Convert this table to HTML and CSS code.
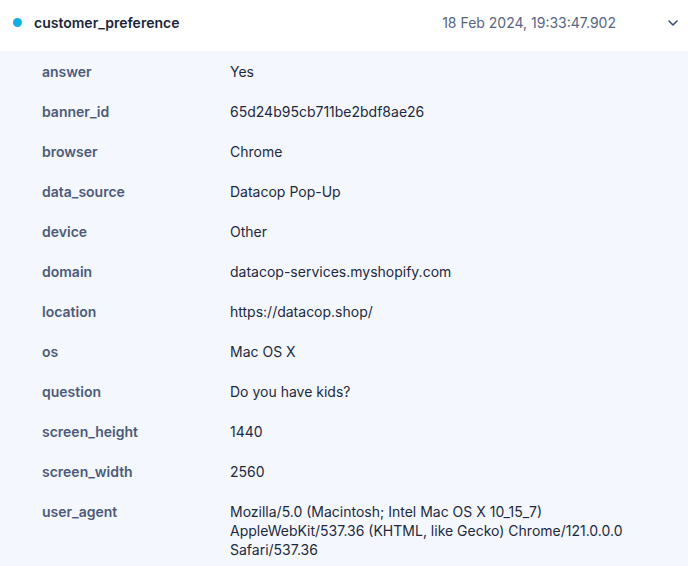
FILE: index.html
```html
<!DOCTYPE html>
<html>
<head>
<meta charset="utf-8">
<link rel="stylesheet" href="styles.css">
</head>
<body>
<div class="event">
  <div class="event-head">
    <span class="dot"></span>
    <span class="title">customer_preference</span>
    <span class="time">18 Feb 2024, 19:33:47.902</span>
    <svg class="chev" width="10" height="6" viewBox="0 0 10 6"><path d="M1 1l4 4 4-4" fill="none" stroke="#3b4f7a" stroke-width="1.6" stroke-linecap="round" stroke-linejoin="round"/></svg>
  </div>
  <div class="props">
    <div class="row"><div class="key">answer</div><div class="val">Yes</div></div>
    <div class="row"><div class="key">banner_id</div><div class="val">65d24b95cb711be2bdf8ae26</div></div>
    <div class="row"><div class="key">browser</div><div class="val">Chrome</div></div>
    <div class="row"><div class="key">data_source</div><div class="val">Datacop Pop-Up</div></div>
    <div class="row"><div class="key">device</div><div class="val">Other</div></div>
    <div class="row"><div class="key">domain</div><div class="val">datacop-services.myshopify.com</div></div>
    <div class="row"><div class="key">location</div><div class="val">https://datacop.shop/</div></div>
    <div class="row"><div class="key">os</div><div class="val">Mac OS X</div></div>
    <div class="row"><div class="key">question</div><div class="val">Do you have kids?</div></div>
    <div class="row"><div class="key">screen_height</div><div class="val">1440</div></div>
    <div class="row"><div class="key">screen_width</div><div class="val">2560</div></div>
    <div class="row"><div class="key">user_agent</div><div class="val">Mozilla/5.0 (Macintosh; Intel Mac OS X 10_15_7) AppleWebKit/537.36 (KHTML, like Gecko) Chrome/121.0.0.0 Safari/537.36</div></div>
  </div>
</div>
</body>
</html>
```
FILE: styles.css
```css
html, body {
  margin: 0;
  padding: 0;
  background: #ffffff;
}
body {
  font-family: Inter, "Noto Sans", sans-serif;
  font-size: 14px;
  color: #1d2a42;
}
.event-head {
  display: flex;
  align-items: center;
  height: 51px;
  padding: 0 10px 0 13px;
  box-sizing: border-box;
  background: #ffffff;
}
.dot {
  width: 9px;
  height: 9px;
  border-radius: 50%;
  background: #0db2e3;
  margin-top: -7px;
  flex: none;
}
.title {
  margin-left: 12px;
  font-weight: 600;
  color: #1b2638;
  margin-top: -7px;
}
.time {
  margin-left: auto;
  color: #576583;
  margin-top: -7px;
  margin-right: 1px;
}
.chev {
  margin-left: 51px;
  margin-top: -6px;
  flex: none;
}
.props {
  background: #f4f7fd;
}
.row {
  display: flex;
  padding: 10.5px 0 10.25px;
  line-height: 19.25px;
}
.key {
  width: 188px;
  padding-left: 42px;
  flex: none;
  font-weight: 600;
  color: #4d5b7c;
}
.val {
  color: #1d2a42;
  padding-right: 20px;
}
```
